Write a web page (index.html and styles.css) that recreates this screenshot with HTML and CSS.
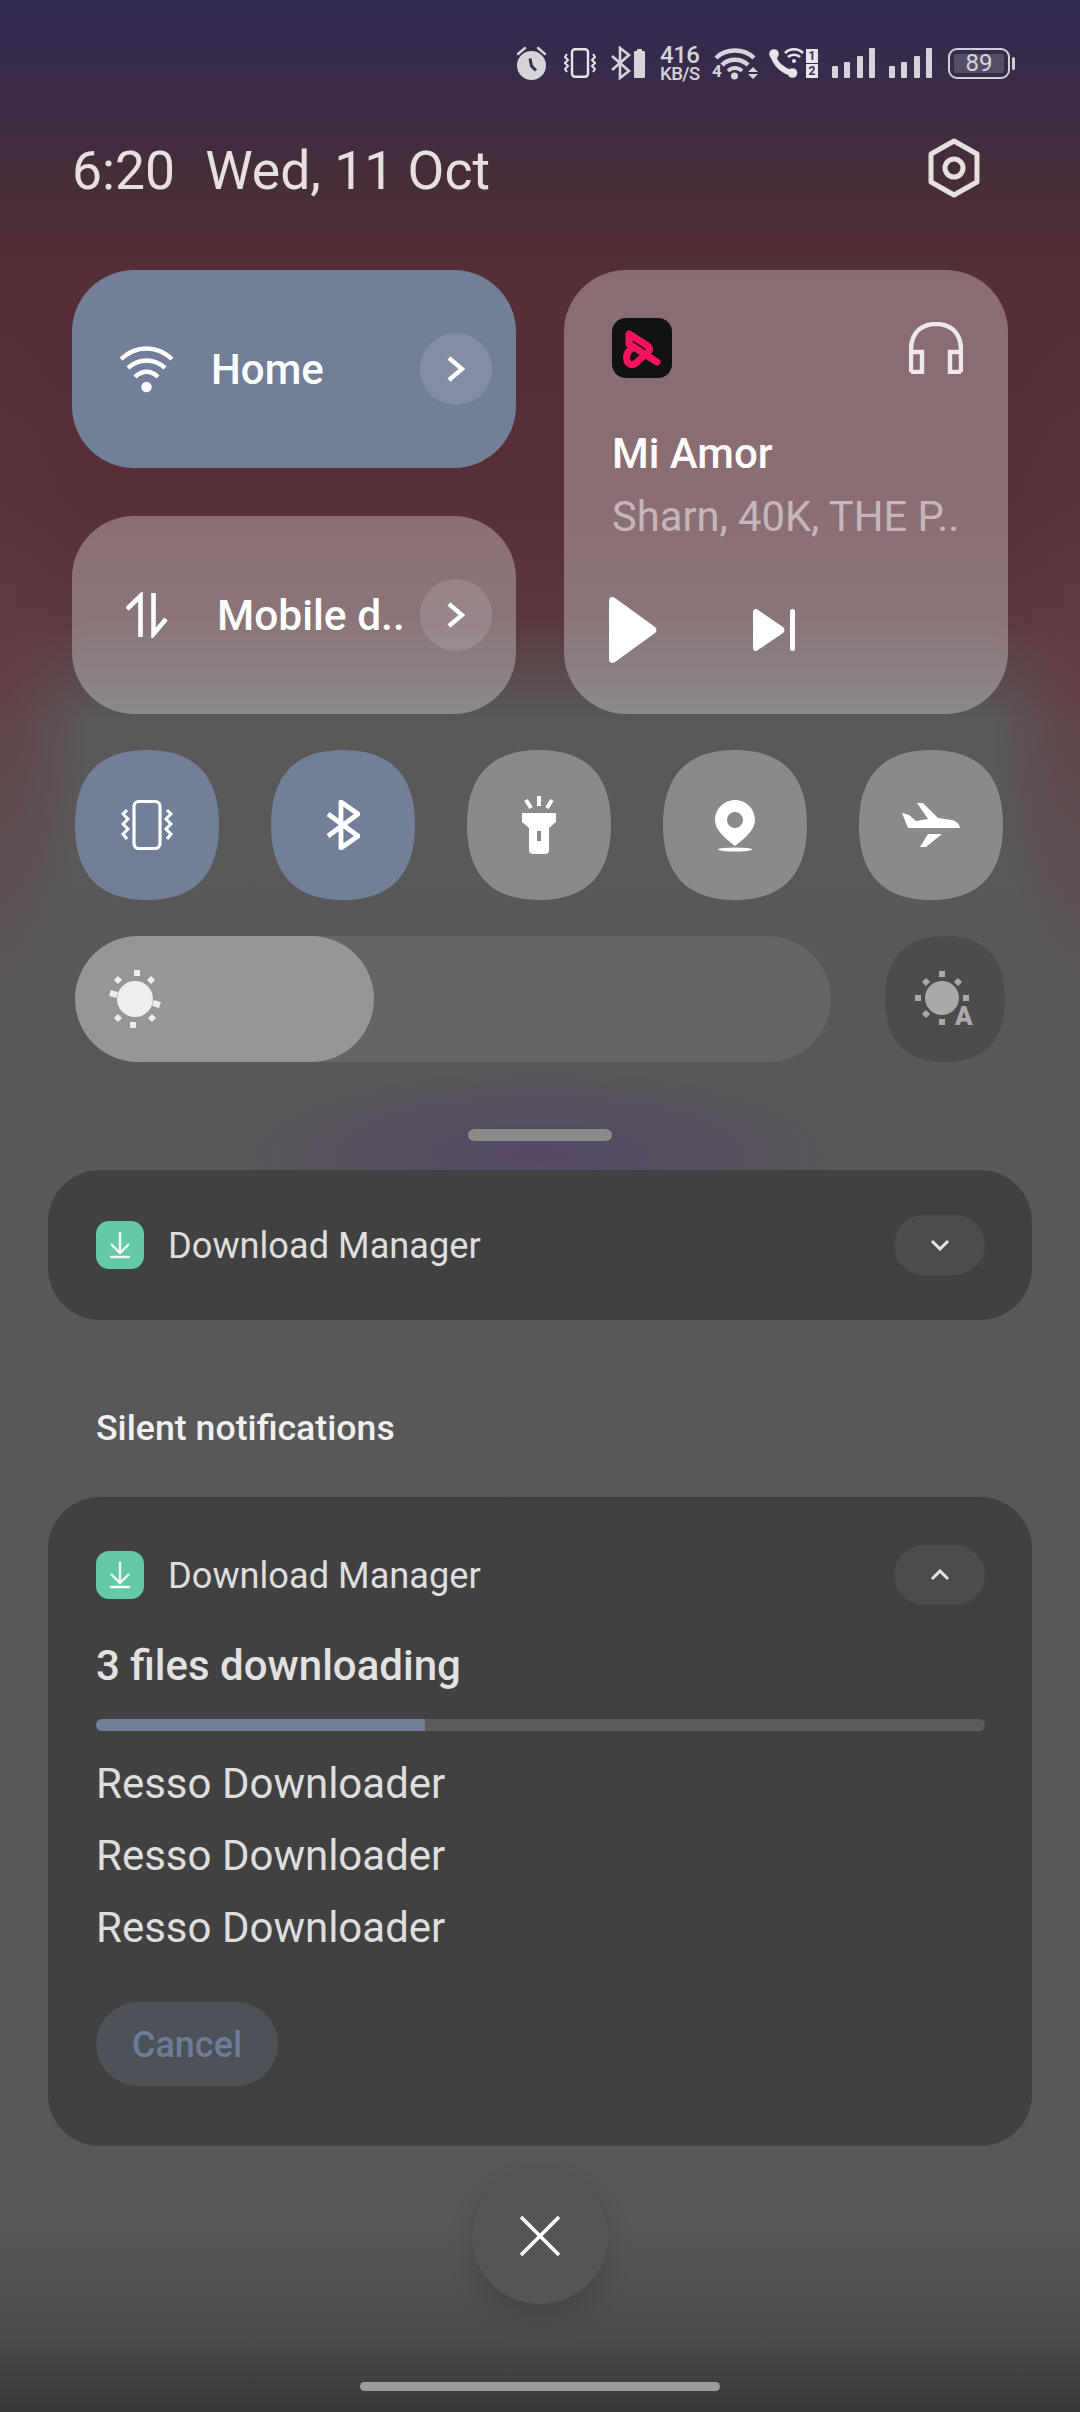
FILE: index.html
```html
<!DOCTYPE html>
<html lang="en">
<head>
    <meta charset="UTF-8">
    <meta name="viewport" content="width=device-width, initial-scale=1.0">
    <title>Quick settings</title>
    <link rel="stylesheet" href="styles.css">
</head>
<body>
    <div class="screen">

        <div class="status">
            <svg class="st-alarm" viewBox="0 0 31 34"><path d="M2 8 9 2M29 8 22 2" stroke="#d6d3da" stroke-width="2.4" stroke-linecap="round"/><circle cx="15.5" cy="19.5" r="14.5" fill="#d6d3da"/><path d="M14 12.5 15.5 20 20 24.5" stroke="#3b2c48" stroke-width="3" fill="none"/></svg>
            <svg class="st-vib" viewBox="0 0 32 30"><rect x="8" y="1.2" width="16" height="27.5" rx="3" fill="none" stroke="#e8e5ea" stroke-width="2.4"/><path d="M3 6 1 9 4 12 1 15 4 18 1 21 3 24M29 6 31 9 28 12 31 15 28 18 31 21 29 24" fill="none" stroke="#e8e5ea" stroke-width="2"/></svg>
            <svg class="st-bt" viewBox="0 0 34 34"><path d="M1 10 18 25 9 32V2L18 9 1 24" fill="none" stroke="#d6d3da" stroke-width="2.6"/><path d="M23 6a1 1 0 0 1 1-1h2V3h5v2h2a1 1 0 0 1 1 1v25a1 1 0 0 1-1 1H24a1 1 0 0 1-1-1z" fill="#d6d3da"/></svg>
            <div class="st-speed"><b>416</b><span>KB/S</span></div>
            <div class="st-wifi">
                <svg viewBox="0 0 47 34"><path d="M4 12C14 2 32 2 42 12M10 19C17 12 29 12 36 19" fill="none" stroke="#d6d3da" stroke-width="4.400"/><path d="M16 25C20 21 26 21 30 25" fill="none" stroke="#d6d3da" stroke-width="3.800"/><circle cx="22.500" cy="30" r="3.500" fill="#d6d3da"/><path d="M36 26h10l-5-5zM36 28h10l-5 5z" fill="#d6d3da"/></svg>
                <span class="st-four">4</span>
            </div>
            <svg class="st-call" viewBox="0 0 35 30"><path d="M4 7C6 16 14 23 23 25" fill="none" stroke="#e8e5ea" stroke-width="5.500"/><circle cx="5" cy="6" r="4.800" fill="#e8e5ea"/><circle cx="23.500" cy="25" r="4.800" fill="#e8e5ea"/><path d="M16 5C21 0 29 0 34 5M19 9C22 6 28 6 31 9" fill="none" stroke="#e8e5ea" stroke-width="2.500"/><circle cx="25" cy="13" r="2" fill="#e8e5ea"/></svg>
            <div class="st-sim"><span>1</span><span>2</span></div>
            <div class="st-signal"><i class="b1"></i><i class="b2"></i><i class="b3"></i><i class="b4"></i></div>
            <div class="st-signal"><i class="b1"></i><i class="b2"></i><i class="b3"></i><i class="b4"></i></div>
            <div class="st-batt"><div class="st-batt-in">89</div></div>
        </div>

        <div class="clock-row">
            <div class="clock"><span class="clock-time">6:20</span><span>Wed, 11 Oct</span></div>
            <svg class="gear" viewBox="0 0 54 60"><path d="M27 3 50 16V44L27 57 4 44V16Z" fill="none" stroke="#e6e0e0" stroke-width="5" stroke-linejoin="round"/><circle cx="27" cy="30" r="9" fill="none" stroke="#e6e0e0" stroke-width="5"/></svg>
        </div>

        <div class="tiles">
            <div class="tile tile-blue tile-home">
                <div class="tile-ic"><svg class="ic-wifi" viewBox="0 0 55 47"><path d="M2 13C17-1 38-1 53 13M9 22C20 12 35 12 46 22M16 31C23 24 32 24 39 31" fill="none" stroke="#fff" stroke-width="4.400"/><circle cx="27.500" cy="41" r="5.200" fill="#fff"/></svg></div>
                <div class="tile-label">Home</div>
                <div class="more"><svg viewBox="0 0 18 26"><path d="M2 2 15 13 2 24" fill="none" stroke="#fff" stroke-width="4.400"/></svg></div>
            </div>
            <div class="music">
                <div class="music-top">
                    <svg class="resso" viewBox="0 0 60 60"><rect width="60" height="60" rx="14" fill="#121212"/><path d="M17 16 36 28Q39 31 36 34L24 45Q18 49 15 43Q13 36 19 31M17 16V26L45 44" fill="none" stroke="#f5125f" stroke-width="7" stroke-linecap="round" stroke-linejoin="round"/></svg>
                    <svg class="phones" viewBox="0 0 54 52"><path d="M2 50V28C2 10 13 2 27 2S52 10 52 28V50M2 30H13V50H2M52 30H41V50H52" fill="none" stroke="#eee8e8" stroke-width="4.400"/></svg>
                </div>
                <div class="music-title">Mi Amor</div>
                <div class="music-sub">Sharn, 40K, THE P..</div>
                <div class="music-ctrl">
                    <svg class="play" viewBox="0 0 48 66"><path d="M0 4C0 0 3-1 6 1L46 30C48 32 48 34 46 36L6 65C3 67 0 66 0 62Z" fill="#fff"/></svg>
                    <svg class="next" viewBox="0 0 42 42"><path d="M0 3C0 0 3-1 5 1L30 18C32 20 32 22 30 24L5 41C3 43 0 42 0 39Z" fill="#fff"/><rect x="37" width="5" height="42" rx="2.500" fill="#fff"/></svg>
                </div>
            </div>
            <div class="tile tile-glass tile-data">
                <div class="tile-ic"><svg class="ic-data" viewBox="0 0 42 46"><path d="M14.500 45V4L1 17M27.500 1V42L40 27" fill="none" stroke="#fff" stroke-width="4.600"/></svg></div>
                <div class="tile-label">Mobile d..</div>
                <div class="more"><svg viewBox="0 0 18 26"><path d="M2 2 15 13 2 24" fill="none" stroke="#fff" stroke-width="4.400"/></svg></div>
            </div>
        </div>

        <div class="rounds">
            <div class="round round-on"><svg class="ic-vib" viewBox="0 0 52 50"><rect x="13" y="1.500" width="26" height="47" rx="5" fill="none" stroke="#fff" stroke-width="3.200"/><path d="M6 10 2 14 7 19 2 24 7 29 2 34 6 39M46 10 50 14 45 19 50 24 45 29 50 34 46 39" fill="none" stroke="#fff" stroke-width="3"/></svg></div>
            <div class="round round-on"><svg class="ic-bt" viewBox="0 0 34 50"><path d="M2 14 32 36 15 48V2L32 14 2 36" fill="none" stroke="#fff" stroke-width="4.800" stroke-linejoin="round"/></svg></div>
            <div class="round"><svg class="ic-torch" viewBox="0 0 34 58"><path d="M17 0V10M4 4 9 12M30 4 25 12" stroke="#fff" stroke-width="4"/><path fill-rule="evenodd" d="M0 17H34V26L27 32V54Q27 58 23 58H11Q7 58 7 54V32L0 26ZM15 35V45H19V35Z" fill="#fff"/></svg></div>
            <div class="round"><svg class="ic-pin" viewBox="0 0 40 52"><path fill-rule="evenodd" d="M20 0C31 0 40 9 40 20 40 30 30 38 20 46 10 38 0 30 0 20 0 9 9 0 20 0ZM20 12A8 8 0 1 0 20 28 8 8 0 1 0 20 12Z" fill="#fff"/><ellipse cx="20" cy="49.500" rx="17" ry="2" fill="#fff"/></svg></div>
            <div class="round"><svg class="ic-plane" viewBox="0 0 58 46"><path d="M0 11 7 13 14 19 26 17 15 1H21L36 16 50 18C55 19 58 23 58 26H6ZM26 32H40L24 45H18Z" fill="#fff"/></svg></div>
        </div>

        <div class="bright">
            <div class="slider">
                <div class="slider-fill" style="width:299px">
                    <svg class="ic-sun" viewBox="0 0 60 60"><circle cx="30" cy="30" r="18" fill="#eee"/><g stroke="#eee" stroke-width="6"><path d="M32 1V7M28 53V59M5 24 12 26M48 34 55 36M11 9 15 13M45 47 49 51M48 9 44 13M15 47 11 51"/></g></svg>
                </div>
            </div>
            <div class="auto"><svg class="ic-auto" viewBox="0 0 62 56"><circle cx="27" cy="27" r="17" fill="#a9a9a9"/><path d="M27 0V6M27 48V54M0 27H6M48 27H54M9 9 13 13M45 9 41 13M9 45 13 41" stroke="#a9a9a9" stroke-width="6"/></svg><span class="auto-a">A</span></div>
        </div>

        <div class="handle"></div>

        <div class="card card-min">
            <div class="card-head">
                <svg class="dl" viewBox="0 0 48 48"><rect width="48" height="48" rx="13" fill="#63c9a6"/><path d="M24 11V31M15 23 24 32 33 23M14 36H34" fill="none" stroke="#f2f7f4" stroke-width="2.400"/></svg>
                <div class="card-app">Download Manager</div>
                <div class="toggle"><svg viewBox="0 0 20 12"><path d="M2 2 10 10 18 2" fill="none" stroke="#e4e4e4" stroke-width="3"/></svg></div>
            </div>
        </div>

        <div class="section">Silent notifications</div>

        <div class="card card-big">
            <div class="card-head">
                <svg class="dl" viewBox="0 0 48 48"><rect width="48" height="48" rx="13" fill="#63c9a6"/><path d="M24 11V31M15 23 24 32 33 23M14 36H34" fill="none" stroke="#f2f7f4" stroke-width="2.400"/></svg>
                <div class="card-app">Download Manager</div>
                <div class="toggle"><svg viewBox="0 0 20 12"><path d="M2 10 10 2 18 10" fill="none" stroke="#e4e4e4" stroke-width="3"/></svg></div>
            </div>
            <div class="card-title">3 files downloading</div>
            <div class="progress"><div class="progress-bar" style="width:329px"></div></div>
            <div class="file">Resso Downloader</div>
            <div class="file">Resso Downloader</div>
            <div class="file">Resso Downloader</div>
            <div class="cancel">Cancel</div>
        </div>

        <div class="close"><svg viewBox="0 0 40 40"><path d="M1 1 39 39M39 1 1 39" fill="none" stroke="#fff" stroke-width="3.600"/></svg></div>

        <div class="homebar"></div>
    </div>
</body>
</html>
```

FILE: styles.css
```css
* {
    box-sizing: border-box;
}
body {
    margin: 0;
    font-family: Roboto, 'Noto Sans', sans-serif;
}
svg {
    display: block;
}
.screen {
    width: 1080px;
    height: 2412px;
    overflow: hidden;
    display: flex;
    flex-direction: column;
    background:
        radial-gradient(ellipse 330px 95px at 540px 1155px, rgba(84, 68, 104, .85), rgba(84, 68, 104, 0)),
        radial-gradient(ellipse 90px 340px at 0 660px, rgba(100, 56, 64, .75), rgba(100, 56, 64, 0)),
        radial-gradient(ellipse 90px 340px at 1080px 660px, rgba(100, 56, 64, .75), rgba(100, 56, 64, 0)),
        linear-gradient(180deg, #322a50 0, #382b4b 70px, #402c42 130px, #4a2e36 200px, #562e36 290px, #592f37 500px, #5a3a3f 620px, #5a5858 720px, #585858 1400px, #575757 2230px, #4a4a4a 2340px, #393939 2412px);
}

/* status bar */
.status {
    height: 46px;
    margin-top: 40px;
    padding-right: 65px;
    display: flex;
    justify-content: flex-end;
    align-items: center;
    gap: 15px;
    color: #d6d3da;
}
.st-alarm { width: 31px; height: 34px; margin-right: 2px; }
.st-vib { width: 32px; height: 30px; }
.st-bt { width: 34px; height: 34px; }
.st-speed {
    width: 41px;
    display: flex;
    flex-direction: column;
}
.st-speed b { height: 21px; font-size: 24px; font-weight: 500; line-height: 21px; letter-spacing: -.5px; }
.st-speed span { height: 16px; font-size: 18.5px; font-weight: 500; line-height: 16px; letter-spacing: -.5px; }
.st-wifi { position: relative; width: 47px; height: 34px; margin-left: -4px; }
.st-wifi svg { width: 47px; height: 34px; }
.st-four { position: absolute; left: 0; bottom: 1px; font-size: 17px; font-weight: 700; line-height: 16px; }
.st-call { width: 35px; height: 30px; margin-left: -5px; }
.st-sim { width: 12px; display: flex; flex-direction: column; gap: 1px; margin-left: -13px; }
.st-sim span {
    height: 14px;
    background: #e8e5ea;
    color: #3b2c48;
    font-size: 12px;
    font-weight: 700;
    line-height: 14px;
    text-align: center;
}
.st-signal {
    width: 43px;
    height: 30px;
    display: flex;
    justify-content: space-between;
    align-items: flex-end;
    margin-left: -1px;
}
.st-signal i { width: 6px; border-radius: 1px; background: #d6d3da; }
.st-signal .b1 { height: 12px; }
.st-signal .b2 { height: 16px; }
.st-signal .b3 { height: 22px; }
.st-signal .b4 { height: 30px; }
.st-batt {
    position: relative;
    width: 62px;
    height: 31px;
    margin-left: 1px;
    margin-right: 5px;
    padding: 4px;
    border: 2px solid #d0cfd5;
    border-radius: 9px;
}
.st-batt::after {
    content: "";
    position: absolute;
    right: -7px;
    top: 7px;
    width: 3px;
    height: 13px;
    border-radius: 2px;
    background: #d0cfd5;
}
.st-batt-in {
    height: 19px;
    background: rgba(255, 255, 255, .16);
    border-radius: 2px;
    font-size: 24px;
    line-height: 19px;
    text-align: center;
}

/* clock row */
.clock-row {
    height: 59px;
    margin-top: 52px;
    padding: 0 99px 0 72px;
    display: flex;
    justify-content: space-between;
    align-items: center;
}
.clock {
    display: flex;
    gap: 30px;
    font-size: 53.5px;
    color: #e6e0e0;
    margin-top: 6px;
}
.gear { width: 54px; height: 60px; }

/* big tiles */
.tiles {
    margin: 73px 72px 0;
    display: grid;
    grid-template-columns: 444px 444px;
    grid-template-rows: 198px 198px;
    gap: 48px;
}
.tile {
    display: flex;
    align-items: center;
    padding: 0 24px 0 47px;
    border-radius: 62px;
    color: #fff;
}
.tile-blue { background: #727f99; }
.tile-glass { background: rgba(255, 255, 255, .3); }
.tile-ic { width: 55px; display: flex; justify-content: center; }
.ic-wifi { width: 55px; height: 47px; }
.ic-data { width: 42px; height: 46px; }
.tile-label { flex: 1; font-size: 42px; font-weight: 500; white-space: nowrap; }
.tile-home .tile-label { padding-left: 37px; }
.tile-data .tile-label { padding-left: 43px; font-size: 42.5px; }
.more {
    width: 72px;
    height: 72px;
    border-radius: 50%;
    background: rgba(255, 255, 255, .12);
    display: flex;
    justify-content: center;
    align-items: center;
}
.more svg { width: 18px; height: 26px; }
.music {
    grid-column: 2;
    grid-row: 1 / 3;
    padding: 48px 45px 0 48px;
    border-radius: 62px;
    background: rgba(255, 255, 255, .3);
    color: #fff;
}
.music-top { display: flex; justify-content: space-between; align-items: flex-start; }
.resso { width: 60px; height: 60px; }
.phones { width: 54px; height: 52px; margin-top: 4px; }
.music-title { margin-top: 46px; font-size: 42px; font-weight: 500; line-height: 60px; }
.music-sub { margin-top: 3px; font-size: 41.7px; line-height: 60px; color: rgba(255, 255, 255, .5); white-space: nowrap; }
.music-ctrl { margin-top: 50px; margin-left: -3px; display: flex; align-items: center; gap: 96px; }
.play { width: 48px; height: 66px; }
.next { width: 42px; height: 42px; }

/* round toggles */
.rounds {
    margin: 36px 0 0 75px;
    display: flex;
    gap: 52px;
}
.round {
    width: 144px;
    height: 150px;
    background: rgba(255, 255, 255, .3);
    display: flex;
    justify-content: center;
    align-items: center;
    clip-path: path("M72 0C122 0 144 28 144 75C144 122 122 150 72 150C22 150 0 122 0 75C0 28 22 0 72 0Z");
}
.round-on { background: #727f99; }
.ic-vib { width: 52px; height: 50px; }
.ic-bt { width: 34px; height: 50px; }
.ic-torch { width: 34px; height: 58px; }
.ic-pin { width: 40px; height: 52px; margin-top: 2px; }
.ic-plane { width: 58px; height: 46px; }

/* brightness */
.bright {
    margin: 36px 0 0 75px;
    display: flex;
    gap: 54px;
}
.slider {
    width: 756px;
    height: 126px;
    border-radius: 63px;
    background: rgba(255, 255, 255, .08);
}
.slider-fill {
    height: 126px;
    padding-left: 30px;
    border-radius: 63px;
    background: rgba(255, 255, 255, .32);
    display: flex;
    align-items: center;
}
.ic-sun { width: 60px; height: 60px; }
.auto {
    position: relative;
    width: 120px;
    height: 126px;
    background: rgba(0, 0, 0, .14);
    display: flex;
    justify-content: center;
    align-items: center;
    clip-path: path("M60 0C102 0 120 24 120 63C120 102 102 126 60 126C18 126 0 102 0 63C0 24 18 0 60 0Z");
}
.ic-auto { width: 62px; height: 56px; margin-left: 2px; }
.auto-a {
    position: absolute;
    left: 70px;
    top: 66px;
    font-size: 26px;
    font-weight: 900;
    line-height: 28px;
    color: #a9a9a9;
}

.handle {
    width: 144px;
    height: 12px;
    margin: 67px auto 0;
    border-radius: 6px;
    background: #8a8a8a;
}

/* notification cards */
.card {
    margin: 0 48px;
    padding: 0 47px 0 48px;
    border-radius: 52px;
    background: #414141;
}
.card-min {
    height: 150px;
    margin-top: 29px;
    display: flex;
    flex-direction: column;
    justify-content: center;
}
.card-head { display: flex; align-items: center; height: 60px; }
.dl { width: 48px; height: 48px; }
.card-app { flex: 1; margin-left: 24px; font-size: 36.2px; color: #dedede; }
.toggle {
    width: 91px;
    height: 60px;
    border-radius: 30px;
    background: #4c4c4c;
    display: flex;
    justify-content: center;
    align-items: center;
}
.toggle svg { width: 20px; height: 12px; }
.section {
    height: 60px;
    margin: 78px 0 0 96px;
    font-size: 35.7px;
    font-weight: 500;
    line-height: 60px;
    color: #f0f0f0;
}
.card-big {
    height: 649px;
    margin-top: 39px;
    padding-top: 48px;
}
.card-title {
    margin-top: 31px;
    font-size: 42px;
    font-weight: 500;
    line-height: 60px;
    color: #e2e2e2;
}
.progress {
    height: 12px;
    margin-top: 23px;
    margin-bottom: 17px;
    border-radius: 6px;
    background: #5b5b5b;
    overflow: hidden;
}
.progress-bar { height: 12px; background: #727f99; }
.file { font-size: 42px; line-height: 72px; color: #dedede; }
.cancel {
    width: 182px;
    height: 84px;
    margin-top: 38px;
    padding-top: 1px;
    border-radius: 42px;
    background: #4d5158;
    color: #6d7c98;
    font-size: 36px;
    font-weight: 500;
    line-height: 84px;
    text-align: center;
}

.close {
    width: 136px;
    height: 136px;
    margin: 22px auto 0;
    border-radius: 50%;
    background: #555;
    box-shadow: 0 14px 28px rgba(0, 0, 0, .14);
    display: flex;
    justify-content: center;
    align-items: center;
}
.close svg { width: 40px; height: 40px; }
.homebar {
    width: 360px;
    height: 9px;
    margin: 78px auto 0;
    border-radius: 5px;
    background: #9b9b9b;
}
```
